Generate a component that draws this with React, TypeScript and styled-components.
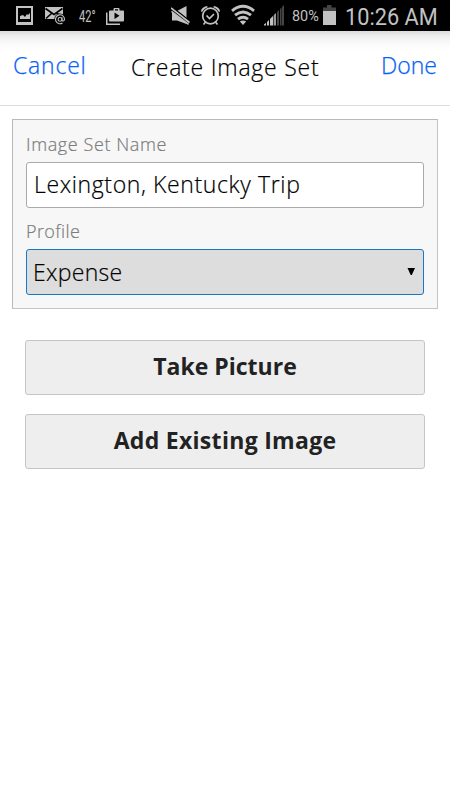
import React, { useState } from "react";
import styled, { createGlobalStyle } from "styled-components";

const GlobalStyle = createGlobalStyle`
  *, *::before, *::after { box-sizing: border-box; }
  body { margin: 0; background: #fff; }
`;

const uiFont = `"Open Sans", "Noto Sans", sans-serif`;

const Screen = styled.div`
  width: 450px;
  height: 800px;
  display: flex;
  flex-direction: column;
  background: #fff;
  font-family: ${uiFont};
  font-weight: 300;
  overflow: hidden;
`;

const StatusBar = styled.div`
  height: 31px;
  flex: none;
  display: flex;
  background: #000;
  color: #c2c2c2;
  padding-left: 16px;
`;

const Glyph = styled.svg<{ $gap?: number }>`
  flex: none;
  height: 31px;
  margin-right: ${(p) => p.$gap ?? 0}px;
`;

const StatusText = styled.span<{ $size: number; $width: number; $gap?: number; $squeeze?: number; $drop?: number }>`
  flex: none;
  width: ${(p) => p.$width}px;
  margin-right: ${(p) => p.$gap ?? 0}px;
  padding-top: ${(p) => p.$drop ?? 0}px;
  font: 400 ${(p) => p.$size}px/31px Roboto, sans-serif;
  white-space: nowrap;
  transform: scaleX(${(p) => p.$squeeze ?? 1});
  transform-origin: left;
`;

const Header = styled.header`
  height: 75px;
  flex: none;
  display: flex;
  padding: 0 12px 0 13px;
  border-bottom: 1px solid #dedede;
  background: linear-gradient(#dcdada 0, #f1f0f0 6px, #fbfbfb 13px, #fff 20px);
`;

const HeaderAction = styled.button<{ $track: number; $width: number }>`
  width: ${(p) => p.$width}px;
  height: 68px;
  border: 0;
  padding: 0;
  background: none;
  color: #0562f5;
  font: 300 23px/68px ${uiFont};
  letter-spacing: ${(p) => p.$track}px;
  text-align: left;
  white-space: nowrap;
  -webkit-text-stroke: 0.25px currentColor;
`;

const Title = styled.h1`
  flex: 1;
  margin: 0;
  color: #000;
  font: 300 23px/72px ${uiFont};
  letter-spacing: 0.77px;
  white-space: nowrap;
  -webkit-text-stroke: 0.2px currentColor;
`;

const Panel = styled.section`
  margin: 13px 12px 0;
  height: 190px;
  padding: 11px 13px 0 13px;
  display: flex;
  flex-direction: column;
  background: #f7f7f7;
  border: 1px solid #b9b9b9;
  border-right-color: #c4c4c4;
  border-bottom-color: #c4c4c4;
`;

const Label = styled.label<{ $track: number }>`
  height: 31px;
  color: #7c7c7c;
  font-size: 18px;
  line-height: 26px;
  letter-spacing: ${(p) => p.$track}px;
  -webkit-text-stroke: 0.2px currentColor;
`;

const TextField = styled.input`
  width: 398px;
  height: 46px;
  margin-bottom: 10px;
  padding: 0 7px 2px;
  border: 1px solid #aaa;
  border-radius: 3px;
  background: #fff;
  color: #000;
  outline: 0;
  font: 300 23px ${uiFont};
  letter-spacing: 0.62px;
  -webkit-text-stroke: 0.2px currentColor;
`;

const SelectBox = styled.button`
  width: 398px;
  height: 46px;
  padding: 0 8px 0 6px;
  display: flex;
  align-items: center;
  justify-content: space-between;
  border: 1px solid #1878c6;
  border-radius: 3px;
  background: #ddd;
  color: #000;
  font: 300 23px ${uiFont};
  letter-spacing: 0.3px;
  -webkit-text-stroke: 0.2px currentColor;
`;

const Actions = styled.div`
  display: flex;
  flex-direction: column;
  gap: 19px;
  margin: 31px 25px 0;
`;

const ActionButton = styled.button<{ $track: number }>`
  height: 55px;
  border: 1px solid #c5c5c5;
  border-radius: 3px;
  padding: 0 0 3px;
  background: #eee;
  color: #222;
  font: 700 23px ${uiFont};
  letter-spacing: ${(p) => p.$track}px;
`;

const PictureGlyph = () => (
  <Glyph $gap={12} width="17" viewBox="16 0 17 31">
    <path fill="#c2c2c2" fillRule="evenodd" d="M16 6h17v19H16zM18 8v14h13V8z" />
    <path fill="#c2c2c2" d="M20 19v-3l3-1 2 2 2-3 1 1 2-2v6z" />
  </Glyph>
);

const MailGlyph = () => (
  <Glyph $gap={13} width="21" viewBox="45 0 21 31">
    <path fill="#c2c2c2" d="M45 7h18v9l-4-1-4 4H45z" />
    <path d="M45.500 8.500 54 14.500 62.500 8.500M46 18.500l6-5.500M62 16l-6-3" fill="none" stroke="#000" strokeWidth="1.600" />
    <circle cx="60" cy="19.300" r="5.700" fill="#000" />
    <g fill="none" stroke="#c2c2c2" strokeWidth="1.100">
      <path d="M62.500 23a4.500 4.500 0 1 1 2-3.700c0 2-2.500 2.500-2.500.4v-2.500" />
      <circle cx="60" cy="19.400" r="1.900" />
    </g>
  </Glyph>
);

const ShoppingGlyph = () => (
  <Glyph $gap={47} width="18" viewBox="106 0 18 31">
    <path fill="none" stroke="#c2c2c2" strokeWidth="1.500" d="M106.750 12.500v11.750H120" />
    <path fill="#c2c2c2" fillRule="evenodd" d="M110 10.500h3.500V9q0-1 1-1h4q1 0 1 1v1.500h3.500q1 0 1 1v9q0 1-1 1h-13q-1 0-1-1v-9q0-1 1-1zm5 0h3V9.300h-3zm-.5 2v6.500l5-3.200z" />
  </Glyph>
);

const MuteGlyph = () => (
  <Glyph $gap={11} width="19" viewBox="171 0 19 31">
    <path fill="#c2c2c2" d="M172 11h5l9.500-5v18L177 20.500h-5z" />
    <path d="M170 7.500 190 23" stroke="#000" strokeWidth="4.500" />
    <path d="m171 8 18.500 14.500M171.500 11.300l17 13" stroke="#c2c2c2" strokeWidth="1.600" />
  </Glyph>
);

const AlarmGlyph = () => (
  <Glyph $gap={11} width="19" viewBox="201 0 19 31">
    <g fill="none" stroke="#c2c2c2" strokeWidth="1.700">
      <circle cx="210.500" cy="16" r="7.800" />
      <path d="m206.500 15.500 3 3 4.500-4.500M206 21.500l-2.500 3M215 21.500l2.500 3" />
    </g>
    <path fill="#c2c2c2" d="M201 11.500q0-4 5.500-5.500l1.500 1q-4 1.500-6 5zM220 11.500q0-4-5.500-5.500L213 7q4 1.500 6 5z" />
  </Glyph>
);

const WifiGlyph = () => (
  <Glyph $gap={9} width="24" viewBox="231 0 24 31">
    <g fill="none" stroke="#c2c2c2" strokeWidth="2.900">
      <path d="M232 10.800q11-9 22 0M235 15.100q8-6.400 16 0M238 19.200q5-4 10 0" />
    </g>
    <path fill="#c2c2c2" d="m243 25-3.200-3.400q3.200-2.400 6.400 0z" />
  </Glyph>
);

const SignalGlyph = () => (
  <Glyph $gap={7} width="21" viewBox="264 0 21 31">
    <path fill="#c2c2c2" d="M264 25.500v-1l2-1.700v2.700zM267 25.500v-3.500l2-2v5.500zM270 25.500V19l3.200-3.300v9.800z" />
    <path fill="#999" d="M273.800 25.500V15l2.200-2v12.500z" />
    <path fill="#444" d="M277 25.500V12l2-2v15.500zM280 25.500V9l1.500-1.500v18zM282 25.500V7l2-2v20.500z" />
  </Glyph>
);

const BatteryGlyph = () => (
  <Glyph $gap={9} width="13" viewBox="323 0 13 31">
    <path fill="#444" d="M323 11V7.500h4V5h4.500v2.500h4.500V11z" />
    <path fill="#c2c2c2" d="M323 11h13v14h-13z" />
  </Glyph>
);

const CaretGlyph = () => (
  <svg width="8" height="8" viewBox="0 0 8 8">
    <path d="M.5 0H8L4.800 7H3.700z" />
  </svg>
);

export default function App() {
  const [name, setName] = useState("Lexington, Kentucky Trip");
  return (
    <>
      <GlobalStyle />
      <Screen>
        <StatusBar>
          <PictureGlyph />
          <MailGlyph />
          <StatusText $size={17} $width={17} $gap={10} $squeeze={0.65} $drop={1}>42°</StatusText>
          <ShoppingGlyph />
          <MuteGlyph />
          <AlarmGlyph />
          <WifiGlyph />
          <SignalGlyph />
          <StatusText $size={15} $width={29} $gap={2} $squeeze={0.96} $drop={1}>80%</StatusText>
          <BatteryGlyph />
          <StatusText $size={23} $width={93} $squeeze={0.945} $drop={2}>10:26 AM</StatusText>
        </StatusBar>
        <Header>
          <HeaderAction $track={0.8} $width={118}>Cancel</HeaderAction>
          <Title>Create Image Set</Title>
          <HeaderAction $track={0} $width={57}>Done</HeaderAction>
        </Header>
        <Panel>
          <Label htmlFor="set-name" $track={0.6}>Image Set Name</Label>
          <TextField id="set-name" value={name} onChange={(e) => setName(e.target.value)} />
          <Label $track={0.4}>Profile</Label>
          <SelectBox>
            Expense
            <CaretGlyph />
          </SelectBox>
        </Panel>
        <Actions>
          <ActionButton $track={0}>Take Picture</ActionButton>
          <ActionButton $track={0.3}>Add Existing Image</ActionButton>
        </Actions>
      </Screen>
    </>
  );
}
